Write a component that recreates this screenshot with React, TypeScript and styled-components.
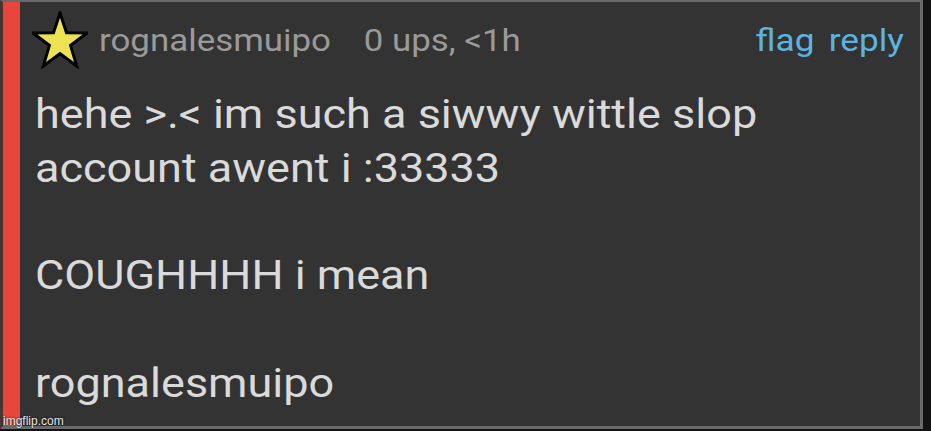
import React from "react";
import styled, { createGlobalStyle } from "styled-components";

const Global = createGlobalStyle`
  html, body { margin: 0; padding: 0; background: #121212; }
  body { font-family: Roboto, "Liberation Sans", sans-serif; }
`;

const Page = styled.div`
  width: 931px;
  height: 431px;
  background: #121212;
  position: relative;
  overflow: hidden;
`;

const Card = styled.div`
  box-sizing: border-box;
  width: 923px;
  height: 429px;
  display: flex;
  background: #333333;
  border-top: 2px solid #6a6a6a;
  border-right: 3px solid #6a6a6a;
  border-bottom: 3px solid #6a6a6a;
  border-left: 3px solid #4a3535;
`;

const Accent = styled.div`
  width: 17px;
  flex: none;
  background: #e8463c;
`;

const Content = styled.div`
  flex: 1;
  display: flex;
  flex-direction: column;
  padding: 9px 16px 0 15px;
`;

const Header = styled.div`
  display: flex;
  align-items: flex-start;
  height: 59px;
`;

const Star = styled.svg`
  width: 56px;
  height: 58px;
  flex: none;
  margin-left: -3px;
  margin-right: 11px;
`;

const MetaGroup = styled.div`
  display: flex;
  gap: 30px;
  margin-top: 10px;
  transform: scaleX(1.09);
  transform-origin: left center;
`;

const Meta = styled.span`
  color: #9a9a9a;
  font-size: 32px;
  line-height: 38px;
  white-space: nowrap;
`;

const Actions = styled.div`
  margin-left: auto;
  margin-top: 10px;
  display: flex;
  gap: 13px;
  transform: scaleX(1.1);
  transform-origin: right center;
`;

const Action = styled.a`
  color: #5db3df;
  font-size: 32px;
  line-height: 38px;
  text-decoration: none;
`;

const Body = styled.div`
  color: #dadada;
  font-size: 40px;
  line-height: 53.8px;
  margin-top: 18px;
  white-space: pre-wrap;
  transform: scaleX(1.125);
  transform-origin: left top;
`;

const Watermark = styled.div`
  position: absolute;
  left: 3px;
  bottom: 3px;
  color: #e6e6e6;
  font-family: "Liberation Sans", Arial, sans-serif;
  font-size: 12px;
  text-shadow: 0 0 2px #000;
`;

export default function App() {
  return (
    <Page>
      <Global />
      <Card>
        <Accent />
        <Content>
          <Header>
            <Star viewBox="0 0 56 58">
              <polygon
                points="28,2 34.5,21.8 55,22 38.6,34.3 44.7,55 28,42.7 11.3,55 17.4,34.3 1,22 21.5,21.8"
                fill="#ece253"
                stroke="#000"
                strokeWidth="3"
                strokeLinejoin="miter"
              />
            </Star>
            <MetaGroup>
              <Meta>rognalesmuipo</Meta>
              <Meta>0 ups, &lt;1h</Meta>
            </MetaGroup>
            <Actions>
              <Action>flag</Action>
              <Action>reply</Action>
            </Actions>
          </Header>
          <Body>{"hehe >.< im such a siwwy wittle slop\naccount awent i :33333\n\nCOUGHHHH i mean\n\nrognalesmuipo"}</Body>
        </Content>
      </Card>
      <Watermark>imgflip.com</Watermark>
    </Page>
  );
}
